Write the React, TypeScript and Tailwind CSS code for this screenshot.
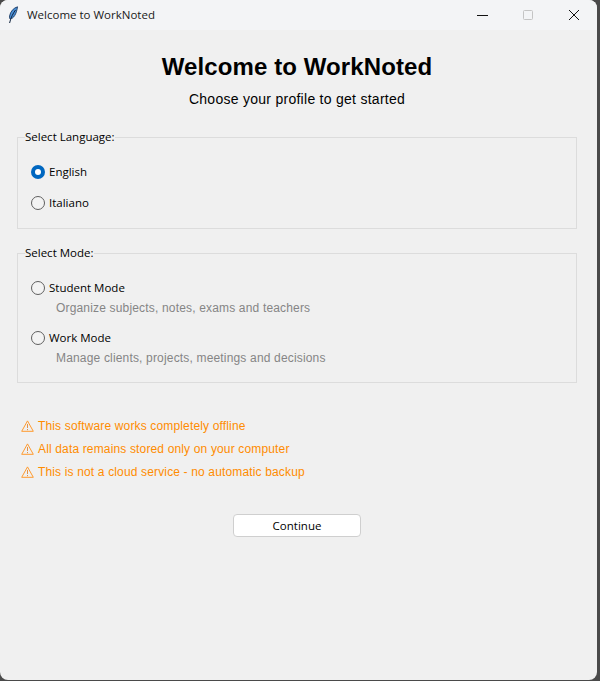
import React from 'react'

const UI_FONT = 'font-["Open_Sans","Noto_Sans",sans-serif]'

function Feather() {
  return (
    <svg width="12" height="18" viewBox="0 0 12 18" className="shrink-0">
      <path d="M10.5 0.8 C6.5 2 3.4 5.5 2.6 10 C2.4 11.5 2.6 12.5 3.2 13 C6.4 12.5 9.4 8.5 10.5 0.8 Z" fill="#4a8fd6" stroke="#1d3b63" strokeWidth="0.9" />
      <path d="M8.5 4 C6 7.5 3.8 11.5 2.6 17" fill="none" stroke="#10233f" strokeWidth="1" />
    </svg>
  )
}

function Radio({ checked }: { checked?: boolean }) {
  return checked ? (
    <span className="flex h-[14px] w-[14px] shrink-0 items-center justify-center rounded-full bg-[#0067c0]">
      <span className="h-[6px] w-[6px] rounded-full bg-white" />
    </span>
  ) : (
    <span className="h-[14px] w-[14px] shrink-0 rounded-full border border-[#5f5f5f] bg-[#f3f3f3]" />
  )
}

function Option({ label, checked, desc }: { label: string; checked?: boolean; desc?: string }) {
  return (
    <div>
      <div className="flex h-[20px] items-center gap-[4px]">
        <Radio checked={checked} />
        <span className={`text-[11.5px] text-black ${UI_FONT}`}>{label}</span>
      </div>
      {desc && <p className="h-[20px] pl-[25px] font-['Liberation_Sans',sans-serif] text-[12px] leading-[20px] tracking-[0.17px] text-[#858585]">{desc}</p>}
    </div>
  )
}

function Group({ title, className, children }: { title: string; className: string; children: React.ReactNode }) {
  return (
    <fieldset className={`mx-[17px] w-[560px] border border-[#dcdcdc] pl-[13px] ${className}`}>
      <legend className={`ml-[-6px] text-[11.5px] leading-[16px] text-black ${UI_FONT}`}>{title}</legend>
      {children}
    </fieldset>
  )
}

function Warning({ text }: { text: string }) {
  return (
    <div className="flex h-[23px] items-center gap-[4px] pl-[21px]">
      <svg width="13" height="12" viewBox="0 0 13 12" className="shrink-0">
        <path d="M6.5 0.9 L12.3 11.3 H0.7 Z" fill="none" stroke="#ff9a2e" strokeWidth="1" strokeLinejoin="round" />
        <path d="M6.5 4 V8 M6.5 9 V10.2" stroke="#e0924a" strokeWidth="1" />
      </svg>
      <span className="font-['Liberation_Sans',sans-serif] text-[12px] tracking-[0.15px] text-[#ff8c00]">{text}</span>
    </div>
  )
}

export default function App() {
  return (
    <div className="h-[681px] w-[600px] overflow-hidden bg-[#4a4a4a]">
      <div className="h-[680px] w-[597px] overflow-hidden rounded-[8px] bg-[#f0f0f0]">
        {/* Title bar */}
        <div className="flex h-[30px] items-center bg-[#f3f4f6]">
          <div className="ml-[7px] flex w-[20px]">
            <Feather />
          </div>
          <span className={`text-[11.5px] text-[#1a1a1a] ${UI_FONT}`}>Welcome to WorkNoted</span>
          <div className="ml-auto flex items-center">
            <svg width="12" height="12" viewBox="0 0 12 12"><path d="M0 6.5 H11" stroke="#111" strokeWidth="1" /></svg>
            <svg width="12" height="12" viewBox="0 0 12 12" className="ml-[33px]"><rect x="1.5" y="1.5" width="9" height="9" rx="1" fill="none" stroke="#c4c4c4" /></svg>
            <svg width="12" height="12" viewBox="0 0 12 12" className="ml-[34px] mr-[17px]"><path d="M1 1 L11 11 M11 1 L1 11" stroke="#111" strokeWidth="1" /></svg>
          </div>
        </div>

        <div className="pt-[22px]">
          <h1 className="w-[594px] text-center font-['Liberation_Sans',sans-serif] text-[24px] font-bold leading-[30px] tracking-[0.1px] text-black">Welcome to WorkNoted</h1>
          <p className="mt-[8px] w-[594px] text-center font-['Liberation_Sans',sans-serif] text-[14px] leading-[18px] tracking-[0.27px] text-black">Choose your profile to get started</p>

          <Group title="Select Language:" className="mt-[21px] h-[100px] pt-[17px]">
            <div className="flex flex-col gap-[11px]">
              <Option label="English" checked />
              <Option label="Italiano" />
            </div>
          </Group>

          <Group title="Select Mode:" className="mt-[16px] h-[138px] pt-[17px]">
            <div className="flex flex-col gap-[10px]">
              <Option label="Student Mode" desc="Organize subjects, notes, exams and teachers" />
              <Option label="Work Mode" desc="Manage clients, projects, meetings and decisions" />
            </div>
          </Group>

          <div className="mt-[31px]">
            <Warning text="This software works completely offline" />
            <Warning text="All data remains stored only on your computer" />
            <Warning text="This is not a cloud service - no automatic backup" />
          </div>

          <div className="mt-[31px] flex w-[594px] justify-center">
            <button className={`h-[23px] w-[128px] rounded-[4px] border border-[#cfcfcf] bg-white text-[11.5px] text-black ${UI_FONT}`}>Continue</button>
          </div>
        </div>
      </div>
    </div>
  )
}
